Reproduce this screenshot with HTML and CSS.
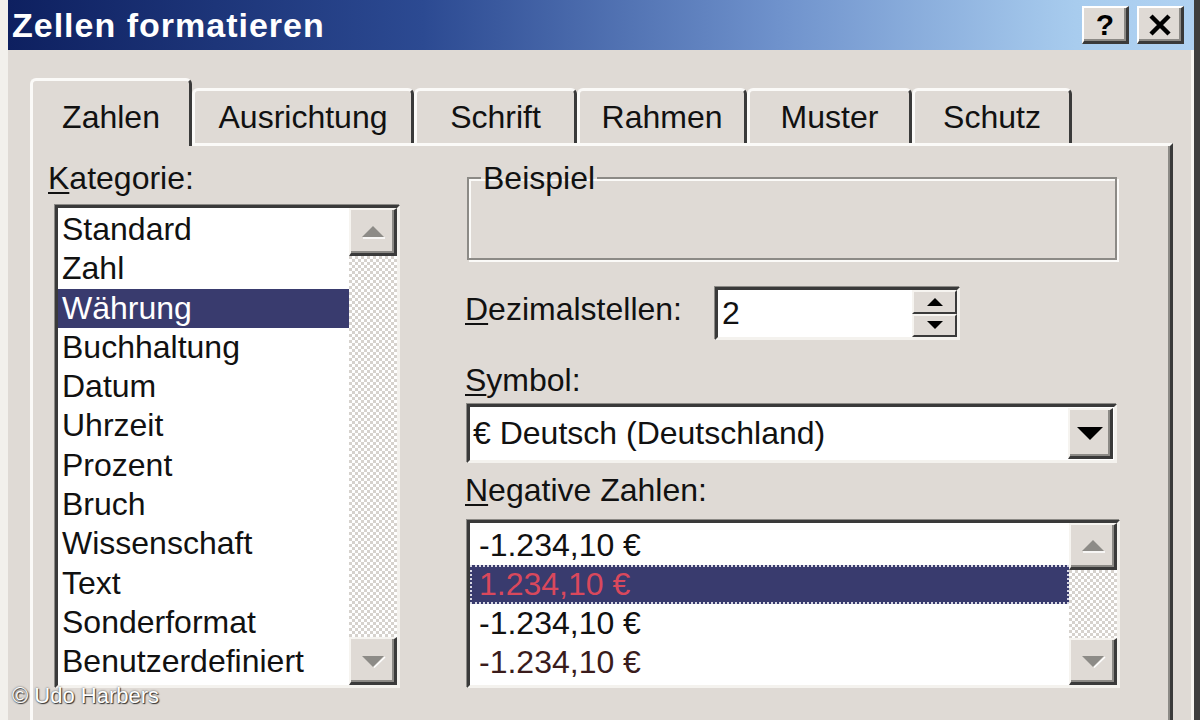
FILE: index.html
```html
<!DOCTYPE html>
<html lang="de">
<head>
<meta charset="utf-8">
<title>Zellen formatieren</title>
<link rel="stylesheet" href="styles.css">
</head>
<body>
<div class="window">
  <div class="titlebar">
    <span class="title">Zellen formatieren</span>
    <div class="tb-buttons">
      <div class="tb-btn help">?</div>
      <div class="tb-btn close">
        <svg width="24" height="22" viewBox="0 0 24 22"><path d="M3 2 L21 20 M21 2 L3 20" stroke="#000" stroke-width="4.5" fill="none"/></svg>
      </div>
    </div>
  </div>
  <div class="content">
    <div class="tabs">
      <div class="tab active t-zahlen">Zahlen</div>
      <div class="tab t-aus">Ausrichtung</div>
      <div class="tab t-schrift">Schrift</div>
      <div class="tab t-rahmen">Rahmen</div>
      <div class="tab t-muster">Muster</div>
      <div class="tab t-schutz">Schutz</div>
    </div>
    <div class="panel">
      <div class="col-left">
        <div class="label"><u>K</u>ategorie:</div>
        <div class="listbox cat">
          <div class="items">
            <div class="item">Standard</div>
            <div class="item">Zahl</div>
            <div class="item sel">Währung</div>
            <div class="item">Buchhaltung</div>
            <div class="item">Datum</div>
            <div class="item">Uhrzeit</div>
            <div class="item">Prozent</div>
            <div class="item">Bruch</div>
            <div class="item">Wissenschaft</div>
            <div class="item">Text</div>
            <div class="item">Sonderformat</div>
            <div class="item">Benutzerdefiniert</div>
          </div>
          <div class="scrollbar">
            <div class="sbtn"><svg width="26" height="14" viewBox="0 0 26 14"><path d="M13 1 L24 12 L2 12 Z" fill="#8d8b87"/><path d="M3 13 L25 13" stroke="#fff" stroke-width="1.5"/></svg></div>
            <div class="track"></div>
            <div class="sbtn"><svg width="26" height="14" viewBox="0 0 26 14"><path d="M2 2 L24 2 L13 13 Z" fill="#8d8b87"/><path d="M14 13.5 L25 3" stroke="#fff" stroke-width="1.5"/></svg></div>
          </div>
        </div>
      </div>
      <div class="col-right">
        <fieldset class="group"><legend>Beispiel</legend></fieldset>
        <div class="row-dec">
          <div class="label dec-label"><u>D</u>ezimalstellen:</div>
          <div class="spin">
            <div class="spin-text">2</div>
            <div class="spin-btns">
              <div class="spin-btn"><svg width="16" height="8" viewBox="0 0 16 8"><path d="M8 0 L16 8 L0 8 Z" fill="#000"/></svg></div>
              <div class="spin-btn"><svg width="16" height="8" viewBox="0 0 16 8"><path d="M0 0 L16 0 L8 8 Z" fill="#000"/></svg></div>
            </div>
          </div>
        </div>
        <div class="label sym-label"><u>S</u>ymbol:</div>
        <div class="combo">
          <div class="combo-text">€ Deutsch (Deutschland)</div>
          <div class="combo-btn"><svg width="26" height="13" viewBox="0 0 26 13"><path d="M0 0 L26 0 L13 13 Z" fill="#000"/></svg></div>
        </div>
        <div class="label neg-label"><u>N</u>egative Zahlen:</div>
        <div class="listbox neg">
          <div class="items">
            <div class="item">-1.234,10 €</div>
            <div class="item sel red">1.234,10 €</div>
            <div class="item">-1.234,10 €</div>
            <div class="item dark-red">-1.234,10 €</div>
          </div>
          <div class="scrollbar">
            <div class="sbtn"><svg width="26" height="14" viewBox="0 0 26 14"><path d="M13 1 L24 12 L2 12 Z" fill="#8d8b87"/><path d="M3 13 L25 13" stroke="#fff" stroke-width="1.5"/></svg></div>
            <div class="track"></div>
            <div class="sbtn"><svg width="26" height="14" viewBox="0 0 26 14"><path d="M2 2 L24 2 L13 13 Z" fill="#8d8b87"/><path d="M14 13.5 L25 3" stroke="#fff" stroke-width="1.5"/></svg></div>
          </div>
        </div>
      </div>
    </div>
  </div>
  <div class="copyright">© Udo Harbers</div>
</div>
</body>
</html>
```

FILE: styles.css
```css
html, body {
  margin: 0;
  padding: 0;
  background: #dfdad5;
}

.window {
  position: relative;
  width: 1200px;
  height: 720px;
  box-sizing: border-box;
  overflow: hidden;
  background: #dfdad5;
  border-left: 8px solid #f2f0ec;
  border-right: 6px solid #3e3e3e;
  box-shadow: inset -3px 0 0 #f6f4f0;
  font-family: "Liberation Sans", Arial, sans-serif;
  color: #111;
}

.titlebar {
  height: 50px;
  display: flex;
  align-items: center;
  justify-content: space-between;
  padding: 0 10px 0 4px;
  background: linear-gradient(to right, #0e2060 0%, #2c4a92 35%, #6f92cc 65%, #a8ccee 90%, #b0d2f2 100%);
}

.title {
  color: #fff;
  font-weight: bold;
  font-size: 34px;
  letter-spacing: 1px;
  line-height: 40px;
}

.tb-buttons {
  display: flex;
  gap: 8px;
}

.tb-btn {
  box-sizing: border-box;
  width: 47px;
  height: 38px;
  background: #dfdad5;
  border-top: 2px solid #fff;
  border-left: 2px solid #fff;
  border-right: 3px solid #3a3a3a;
  border-bottom: 3px solid #3a3a3a;
  box-shadow: inset -2px -2px 0 #8c8a86;
  display: flex;
  align-items: center;
  justify-content: center;
}

.help {
  font-weight: bold;
  font-size: 30px;
  line-height: 30px;
  color: #000;
}

.content {
  padding: 28px 0 0 22px;
}

.tabs {
  display: flex;
  align-items: flex-end;
  height: 65px;
}

.tab {
  box-sizing: border-box;
  height: 55px;
  padding-top: 8px;
  background: #dfdad5;
  border-top: 3px solid #fbfaf8;
  border-left: 3px solid #fbfaf8;
  border-right: 3px solid #3a3a3a;
  border-radius: 6px 6px 0 0;
  text-align: center;
  font-size: 32px;
  line-height: 36px;
  white-space: nowrap;
}

.tab.active {
  position: relative;
  z-index: 2;
  height: 68px;
  margin-bottom: -3px;
  padding-top: 18px;
}

.t-zahlen { width: 162px; }
.t-aus { width: 222px; }
.t-schrift { width: 163px; }
.t-rahmen { width: 170px; }
.t-muster { width: 165px; }
.t-schutz { width: 160px; }

.panel {
  position: relative;
  box-sizing: border-box;
  width: 1143px;
  height: 620px;
  display: flex;
  padding: 14px 0 0 15px;
  border-top: 3px solid #fbfaf8;
  border-left: 3px solid #fbfaf8;
  border-right: 3px solid #3a3a3a;
  box-shadow: inset -2px 0 0 #8c8a86;
}

.label {
  font-size: 32px;
  line-height: 36px;
  white-space: nowrap;
}

.label u {
  text-decoration-thickness: 2px;
  text-underline-offset: 3px;
}

.col-left {
  width: 352px;
}

.listbox {
  box-sizing: border-box;
  display: flex;
  background: #fff;
  border-style: solid;
  border-width: 3px;
  border-color: #3a3a3a #f4f2ee #f4f2ee #3a3a3a;
  box-shadow: -1px -1px 0 #8c8a86;
}

.listbox.cat {
  margin: 9px 0 0 7px;
  width: 345px;
  height: 483px;
}

.items {
  flex: 1;
  min-width: 0;
}

.cat .items {
  padding-top: 2px;
}

.cat .item {
  height: 39.3px;
  line-height: 39.3px;
  padding-left: 4px;
  font-size: 32px;
  white-space: nowrap;
}

.item.sel {
  background: #393b6e;
  color: #fff;
}

.scrollbar {
  width: 48px;
  display: flex;
  flex-direction: column;
}

.sbtn {
  box-sizing: border-box;
  height: 48px;
  background: #dfdad5;
  border-top: 2px solid #f6f4f0;
  border-left: 2px solid #f6f4f0;
  border-right: 3px solid #3a3a3a;
  border-bottom: 3px solid #3a3a3a;
  box-shadow: inset -2px -2px 0 #8c8a86;
  display: flex;
  align-items: center;
  justify-content: center;
}

.track {
  flex: 1;
  background: repeating-conic-gradient(#ffffff 0 25%, #d6d2cd 0 50%) 0 0 / 6px 6px;
}

.col-right {
  width: 655px;
  margin-left: 65px;
}

.group {
  box-sizing: border-box;
  margin: 0 0 0 2px;
  padding: 0;
  width: 650px;
  height: 100px;
  border: 2px solid #8c8a86;
  box-shadow: inset 2px 2px 0 #fbfaf8, 2px 2px 0 #fbfaf8;
}

.group legend {
  margin-left: 12px;
  padding: 0 2px;
  font-size: 32px;
  line-height: 36px;
}

.row-dec {
  display: flex;
  align-items: flex-start;
  margin-top: 27px;
  height: 53px;
}

.dec-label {
  width: 250px;
  margin-top: 4px;
}

.spin {
  box-sizing: border-box;
  width: 245px;
  height: 53px;
  display: flex;
  background: #fff;
  border-style: solid;
  border-width: 3px;
  border-color: #3a3a3a #f4f2ee #f4f2ee #3a3a3a;
  box-shadow: -1px -1px 0 #8c8a86;
}

.spin-text {
  flex: 1;
  padding-left: 4px;
  font-size: 32px;
  line-height: 47px;
}

.spin-btns {
  width: 45px;
  display: flex;
  flex-direction: column;
}

.spin-btn {
  box-sizing: border-box;
  flex: 1;
  background: #dfdad5;
  border-top: 2px solid #f6f4f0;
  border-left: 2px solid #f6f4f0;
  border-right: 2px solid #3a3a3a;
  border-bottom: 2px solid #3a3a3a;
  display: flex;
  align-items: center;
  justify-content: center;
}

.sym-label {
  margin-top: 22px;
}

.combo {
  box-sizing: border-box;
  margin: 6px 0 0 2px;
  width: 650px;
  height: 59px;
  display: flex;
  align-items: center;
  background: #fff;
  border-style: solid;
  border-width: 3px;
  border-color: #3a3a3a #f4f2ee #f4f2ee #3a3a3a;
  box-shadow: -1px -1px 0 #8c8a86;
}

.combo-text {
  flex: 1;
  padding-left: 3px;
  font-size: 32px;
  line-height: 53px;
  white-space: nowrap;
}

.combo-btn {
  box-sizing: border-box;
  width: 45px;
  height: 51px;
  margin-right: 1px;
  background: #dfdad5;
  border-top: 2px solid #f6f4f0;
  border-left: 2px solid #f6f4f0;
  border-right: 3px solid #3a3a3a;
  border-bottom: 3px solid #3a3a3a;
  box-shadow: inset -2px -2px 0 #8c8a86;
  display: flex;
  align-items: center;
  justify-content: center;
}

.neg-label {
  margin-top: 9px;
}

.listbox.neg {
  margin: 12px 0 0 2px;
  width: 653px;
  height: 168px;
}

.neg .items {
  padding-top: 3px;
}

.neg .item {
  box-sizing: border-box;
  height: 39px;
  line-height: 39px;
  padding-left: 9px;
  font-size: 32px;
  white-space: nowrap;
}

.neg .sbtn {
  height: 47px;
}

.item.red {
  color: #d9485c;
  outline: 2px dotted #d8d8e4;
  outline-offset: -2px;
}

.item.dark-red {
  color: #3a1c1c;
}

.copyright {
  position: absolute;
  left: 4px;
  top: 683px;
  font-family: "Liberation Sans", Arial, sans-serif;
  font-size: 22px;
  color: #fff;
  text-shadow: 1px 1px 1px #333, 0 0 2px #444;
  white-space: nowrap;
}
```
